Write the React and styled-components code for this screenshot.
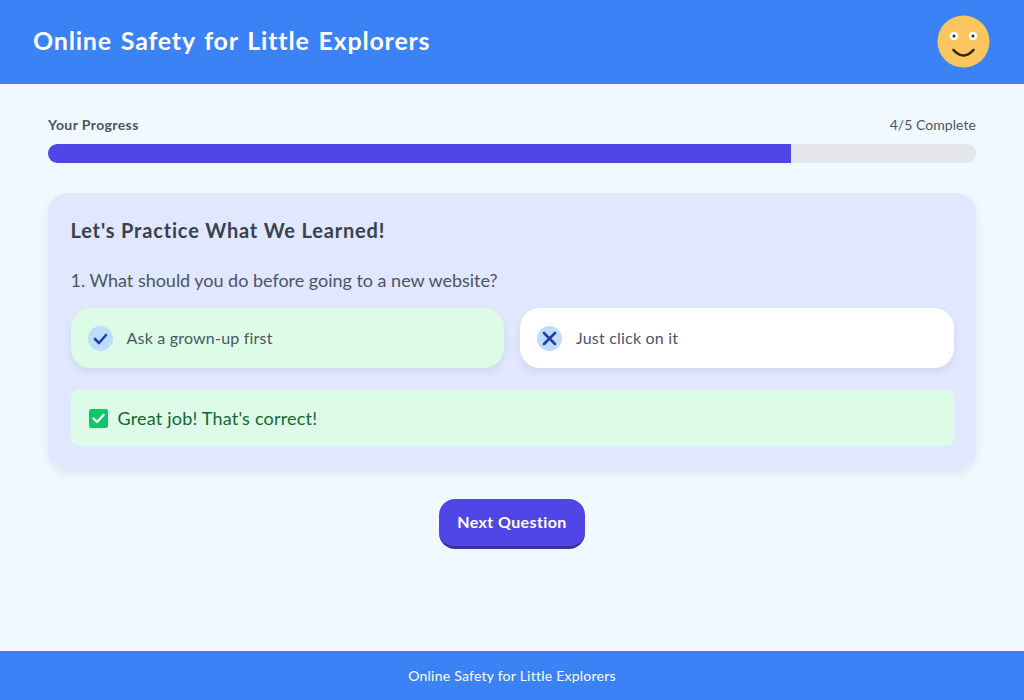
import React from 'react';
import styled, { createGlobalStyle } from 'styled-components';

const GlobalStyle = createGlobalStyle`
  html, body { margin: 0; padding: 0; }
  body {
    background-color: #F0F9FF;
    font-family: "Lato", "Noto Sans", sans-serif;
    color: #374151;
  }
`;

const Page = styled.div`
  display: flex;
  flex-direction: column;
  height: 700px;
  background-color: #F0F9FF;
`;

const Header = styled.header`
  display: flex;
  justify-content: space-between;
  align-items: center;
  height: 84px;
  padding: 0 34px 2px 33px;
  box-sizing: border-box;
  background-color: #3B82F6;
`;

const Title = styled.h1`
  margin: 0;
  padding-bottom: 3px;
  font-size: 25px;
  font-weight: 700;
  letter-spacing: 0.8px;
  word-spacing: 2px;
  color: #FFFFFF;
`;

const Main = styled.main`
  flex: 1;
  display: flex;
  flex-direction: column;
  padding: 32px 48px 0;
`;

const ProgressLabels = styled.div`
  display: flex;
  justify-content: space-between;
  align-items: center;
  height: 16px;
  margin-bottom: 12px;
  font-size: 14px;
  letter-spacing: 0.05px;
  color: #4B5563;
`;

const ProgressName = styled.span`
  font-weight: 700;
  letter-spacing: 0.4px;
  color: #4B5563;
`;

const Track = styled.div`
  height: 19px;
  border-radius: 10px;
  background-color: #E5E7EB;
  overflow: hidden;
`;

const Fill = styled.div`
  height: 100%;
  background-color: #4F46E5;
`;

const Card = styled.section`
  margin-top: 30px;
  padding: 23px 22.5px 24px;
  border-radius: 20px;
  background-color: #E0E7FF;
  box-shadow: 0 4px 10px rgba(0, 0, 0, 0.08);
`;

const CardTitle = styled.h2`
  margin: 0 0 24px;
  font-size: 20px;
  line-height: 28px;
  font-weight: 700;
  letter-spacing: 0.83px;
  color: #374151;
`;

const Question = styled.p`
  margin: 0 0 15px;
  font-size: 18px;
  line-height: 25px;
  letter-spacing: -0.02px;
  color: #4B5563;
`;

const Options = styled.div`
  display: grid;
  grid-template-columns: 1fr 1fr;
  gap: 16px;
`;

const Option = styled.div`
  display: flex;
  align-items: center;
  gap: 14px;
  height: 60px;
  padding: 0 17px;
  box-sizing: border-box;
  border-radius: 20px;
  background-color: ${(p) => (p.$correct ? '#DCFCE7' : '#FFFFFF')};
  box-shadow: 0 4px 8px rgba(0, 0, 0, 0.07);
  font-size: 16px;
  letter-spacing: 0.2px;
  color: #4B5563;
`;

const OptionIcon = styled.span`
  display: flex;
  align-items: center;
  justify-content: center;
  width: 25px;
  height: 25px;
  border-radius: 50%;
  background-color: #BFDBFE;
  color: #1E40AF;
`;

const OptionLabel = styled.span`
  padding-bottom: 2px;
`;

const Feedback = styled.div`
  display: flex;
  align-items: center;
  gap: 10px;
  height: 56px;
  margin-top: 22px;
  padding: 0 18px;
  box-sizing: border-box;
  border-radius: 8px;
  background-color: #DCFCE7;
  font-size: 18px;
  letter-spacing: 0.2px;
  color: #166534;
`;

const NextButton = styled.button`
  align-self: center;
  width: 146px;
  height: 50px;
  margin-top: 29px;
  padding: 0 0 3px;
  border: none;
  border-bottom: 3px solid #3730A3;
  border-radius: 16px;
  background-color: #4F46E5;
  font-family: inherit;
  font-size: 16px;
  font-weight: 700;
  letter-spacing: 0.4px;
  color: #FFFFFF;
`;

const Footer = styled.footer`
  display: flex;
  align-items: center;
  justify-content: center;
  height: 49px;
  background-color: #3B82F6;
  font-size: 14px;
  letter-spacing: 0.24px;
  color: #FFFFFF;
`;

const Smiley = () => (
  <svg width="53" height="53" viewBox="0 0 53 53">
    <circle cx="26.5" cy="26.5" r="26" fill="#FCC65F" />
    <circle cx="17" cy="21" r="4.3" fill="#FFFFFF" />
    <circle cx="36" cy="21" r="4.3" fill="#FFFFFF" />
    <circle cx="17" cy="21" r="1.5" fill="#1F2937" />
    <circle cx="36" cy="21" r="1.5" fill="#1F2937" />
    <path d="M16.5 35 Q26.5 46 36.5 35" fill="none" stroke="#33240C" strokeWidth="2.6" strokeLinecap="round" />
  </svg>
);

const CheckIcon = () => (
  <svg width="15" height="15" viewBox="0 0 15 15">
    <path d="M2 8 L6 12 L13 4" fill="none" stroke="currentColor" strokeWidth="2.6" strokeLinecap="round" strokeLinejoin="round" />
  </svg>
);

const CrossIcon = () => (
  <svg width="15" height="15" viewBox="0 0 15 15">
    <path d="M2 2 L13 13 M13 2 L2 13" fill="none" stroke="currentColor" strokeWidth="2.6" strokeLinecap="round" />
  </svg>
);

const CheckBox = () => (
  <svg width="19" height="19" viewBox="0 0 19 19">
    <rect width="19" height="19" rx="2.5" fill="#0FC76B" />
    <path d="M4.5 9.5 L8 13 L14.5 6" fill="none" stroke="#FFFFFF" strokeWidth="2.4" strokeLinecap="round" strokeLinejoin="round" />
  </svg>
);

const App = () => {
  return (
    <>
      <GlobalStyle />
      <Page>
        <Header>
          <Title>Online Safety for Little Explorers</Title>
          <Smiley />
        </Header>
        <Main>
          <ProgressLabels>
            <ProgressName>Your Progress</ProgressName>
            <span>4/5 Complete</span>
          </ProgressLabels>
          <Track>
            <Fill style={{ width: '80.1%' }} />
          </Track>
          <Card>
            <CardTitle>Let's Practice What We Learned!</CardTitle>
            <Question>1. What should you do before going to a new website?</Question>
            <Options>
              <Option $correct>
                <OptionIcon><CheckIcon /></OptionIcon>
                <OptionLabel>Ask a grown-up first</OptionLabel>
              </Option>
              <Option>
                <OptionIcon><CrossIcon /></OptionIcon>
                <OptionLabel>Just click on it</OptionLabel>
              </Option>
            </Options>
            <Feedback>
              <CheckBox />
              Great job! That's correct!
            </Feedback>
          </Card>
          <NextButton>Next Question</NextButton>
        </Main>
        <Footer>Online Safety for Little Explorers</Footer>
      </Page>
    </>
  );
};

export default App;
